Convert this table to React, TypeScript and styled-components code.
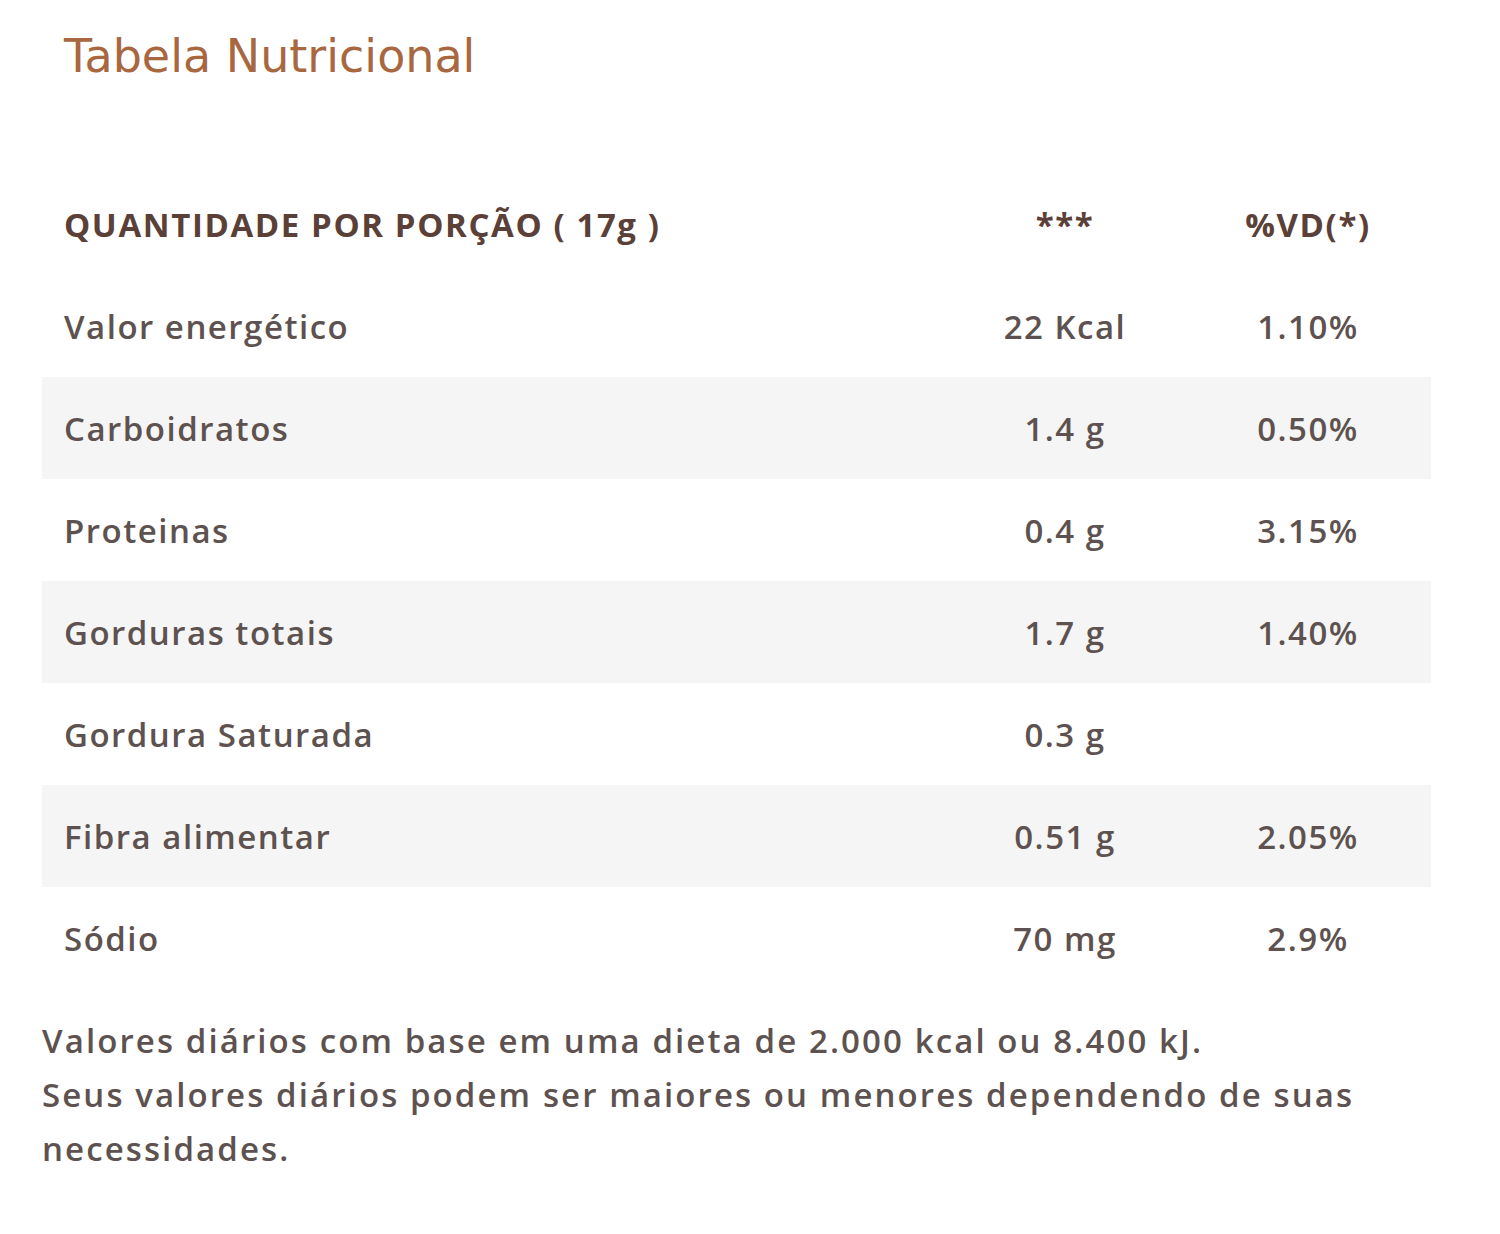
import React from "react";
import styled, { createGlobalStyle } from "styled-components";

const GlobalStyle = createGlobalStyle`
  html, body {
    margin: 0;
    padding: 0;
    background: #ffffff;
  }
  body {
    font-family: "Open Sans", "Liberation Sans", sans-serif;
    color: #5d504d;
  }
`;

const Page = styled.div`
  width: 1500px;
  padding: 26px 0 0 42px;
  box-sizing: border-box;
`;

const Title = styled.h2`
  margin: 0 0 0 22px;
  font-family: "DejaVu Sans", sans-serif;
  font-weight: 400;
  font-size: 46px;
  line-height: 60px;
  color: #a8673f;
`;

const Table = styled.div`
  width: 1389px;
  margin-top: 87px;
  display: grid;
  grid-template-columns: 903px 240px 246px;
`;

const Row = styled.div<{ $striped?: boolean }>`
  display: contents;
  & > div {
    background: ${(p) => (p.$striped ? "#f5f5f5" : "transparent")};
  }
`;

const Cell = styled.div<{ $center?: boolean; $head?: boolean }>`
  height: 102px;
  display: flex;
  align-items: center;
  justify-content: ${(p) => (p.$center ? "center" : "flex-start")};
  padding-left: ${(p) => (p.$center ? "0" : "22px")};
  font-size: 33px;
  font-weight: ${(p) => (p.$head ? 700 : 600)};
  color: ${(p) => (p.$head ? "#5b4038" : "#5e5250")};
  letter-spacing: ${(p) => (p.$head ? "1.6px" : "1.5px")};
`;

const Note = styled.p`
  margin: 25px 0 0;
  font-size: 33px;
  font-weight: 600;
  line-height: 54px;
  letter-spacing: 2.1px;
  color: #5e5250;
  width: 1370px;
`;

const rows: [string, string, string][] = [
  ["Valor energético", "22 Kcal", "1.10%"],
  ["Carboidratos", "1.4 g", "0.50%"],
  ["Proteinas", "0.4 g", "3.15%"],
  ["Gorduras totais", "1.7 g", "1.40%"],
  ["Gordura Saturada", "0.3 g", ""],
  ["Fibra alimentar", "0.51 g", "2.05%"],
  ["Sódio", "70 mg", "2.9%"],
];

export default function App() {
  return (
    <Page>
      <GlobalStyle />
      <Title>Tabela Nutricional</Title>
      <Table>
        <Row>
          <Cell $head>QUANTIDADE POR PORÇÃO ( 17g )</Cell>
          <Cell $head $center>***</Cell>
          <Cell $head $center>%VD(*)</Cell>
        </Row>
        {rows.map(([label, amount, vd], i) => (
          <Row key={label} $striped={i % 2 === 1}>
            <Cell>{label}</Cell>
            <Cell $center>{amount}</Cell>
            <Cell $center>{vd}</Cell>
          </Row>
        ))}
      </Table>
      <Note>
        Valores diários com base em uma dieta de 2.000 kcal ou 8.400 kJ.
        <br />
        Seus valores diários podem ser maiores ou menores dependendo de suas
        necessidades.
      </Note>
    </Page>
  );
}
